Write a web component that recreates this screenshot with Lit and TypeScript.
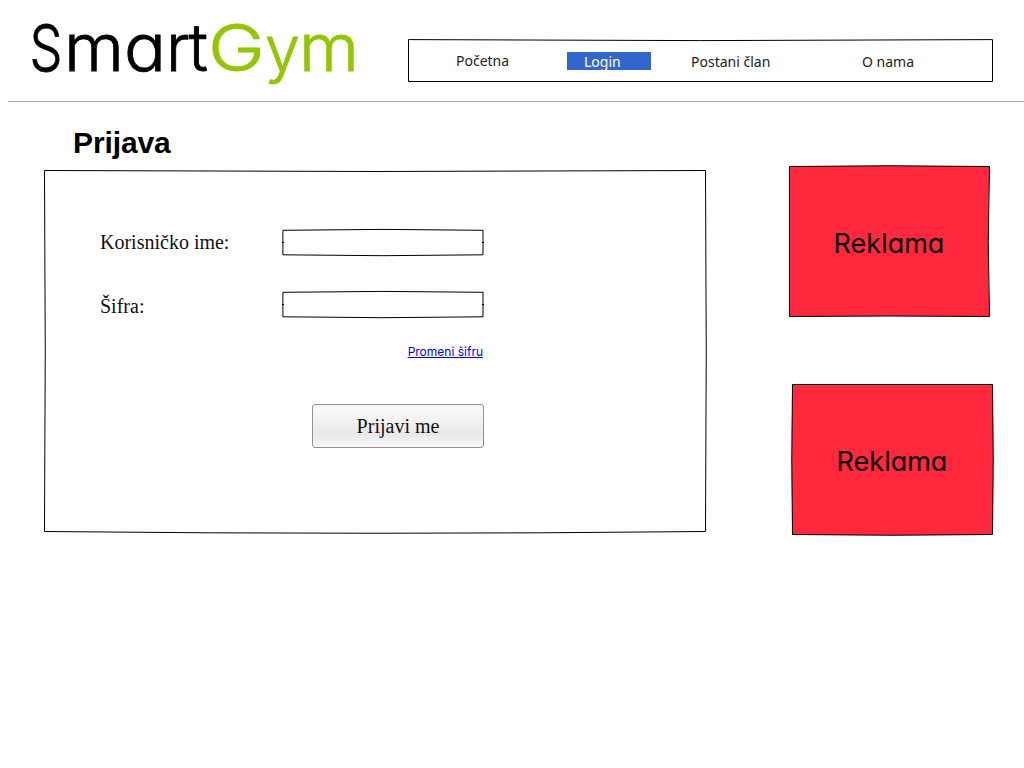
import { LitElement, html, css, svg } from "lit";
import { customElement, property } from "lit/decorators.js";

/** Box with a slightly bowed, hand-drawn outline; content sits on top of it. */
@customElement("sketch-box")
class SketchBox extends LitElement {
  @property() path = "";
  @property() fill = "none";
  static styles = css`
    :host { display: grid; box-sizing: border-box; }
    svg, .content { grid-area: 1 / 1; min-width: 0; min-height: 0; }
    svg { width: 100%; height: 100%; overflow: visible; display: block; }
    .content { display: grid; position: relative; }
    path { stroke: #000; stroke-width: 1; }
  `;
  render() {
    return html`<svg>${svg`<path d=${this.path} fill=${this.fill}></path>`}</svg>
      <div class="content"><slot></slot></div>`;
  }
}

const FIELD_PATH = "M.9 2.3Q101 .5 201 2.3V26.8Q101 28.6 .9 26.8ZM0 14.5H2M200 14.5H202";

@customElement("app-root")
class AppRoot extends LitElement {
  static styles = css`
    :host { display: block; width: 1024px; height: 768px; background: #fff; color: #000; overflow: hidden; }
    .header { display: flex; height: 102px; margin-left: 8px; border-bottom: 1px solid #a8a89f; box-sizing: border-box; }
    .logo { width: 400px; height: 101px; flex: none; }
    .logo text { font-family: "Inter", sans-serif; font-weight: 300; font-size: 65px; font-feature-settings: "cv11" 1; stroke: #000; stroke-width: 0.8; }
    .logo .tail { font-size: 63px; }
    .logo .green { fill: #93c600; stroke: #93c600; }
    .nav { width: 585px; height: 42px; margin-top: 39px; flex: none; }
    .links { display: flex; align-items: flex-start; padding-top: 13px; font: 14px/18px "Noto Sans", sans-serif; color: #222; white-space: nowrap; }
    .links span { box-sizing: border-box; height: 18px; flex: none; }
    .l1 { width: 111px; margin-left: 48px; }
    .links .l2 { width: 84px; background: #3366cc; color: #fff; padding-left: 17px; line-height: 20px; }
    .l3 { width: 131px; margin-left: 40px; padding-top: 1px; }
    .l4 { margin-left: 40px; padding-top: 1px; }
    .main { display: flex; }
    .left { width: 662px; margin-left: 44px; }
    h1 { margin: 0; padding: 23px 0 0 29px; height: 45px; font: bold 30px/36px "Liberation Sans", sans-serif; letter-spacing: -0.1px; }
    .panel { height: 362px; }
    .form { display: grid; grid-template-columns: 182px 202px; grid-template-rows: 62px 54px 60px 44px; padding: 58px 0 0 56px; align-items: start; font: 20px/24px "Liberation Serif", serif; color: #111; }
    .label { padding-top: 2px; }
    .label.low { padding-top: 4px; }
    .field { height: 27px; }
    .link { grid-column: 2; justify-self: end; font: 12px/16px "Comic Sans MS", "Inter", sans-serif; font-feature-settings: "cv11" 1; color: #00f; text-decoration: underline; white-space: nowrap; margin-right: 1px; }
    button { grid-column: 2; justify-self: end; width: 172px; height: 44px; padding: 0; border: 1px solid #9c9084; border-radius: 3px; background: linear-gradient(#fafafa, #efefef 48%, #e8e8e8 70%, #f8f8f8); font: 20px/24px "Liberation Serif", serif; color: #111; }
    .ads { display: flex; flex-direction: column; gap: 67px; padding: 64px 0 0 83px; }
    .ad { width: 202px; height: 151px; }
    .ad.second { margin-left: 3px; }
    .word { place-self: center; padding: 4px 2px 0 0; font: 27px/34px "Comic Sans MS", "Inter", sans-serif; font-feature-settings: "cv11" 1; }
  `;
  render() {
    return html`
      <div class="header">
        <svg class="logo" viewBox="8 0 400 101">
          <text y="71"><tspan x="29.5" textLength="33" lengthAdjust="spacingAndGlyphs">S</tspan><tspan x="64" textLength="60" lengthAdjust="spacingAndGlyphs">m</tspan><tspan x="124" textLength="42" lengthAdjust="spacingAndGlyphs">a</tspan><tspan x="166">r</tspan><tspan x="188.5">t</tspan></text>
          <text class="green" y="71"><tspan x="208" textLength="57" lengthAdjust="spacingAndGlyphs">G</tspan><tspan class="tail" x="265">y</tspan><tspan x="299" textLength="60" lengthAdjust="spacingAndGlyphs">m</tspan></text>
        </svg>
        <sketch-box class="nav" path="M.5 .6Q292 2.6 584.5.6V42.5H.5Z">
          <div class="links">
            <span class="l1">Početna</span><span class="l2">Login</span><span class="l3">Postani član</span><span class="l4">O nama</span>
          </div>
        </sketch-box>
      </div>
      <div class="main">
        <div class="left">
          <h1>Prijava</h1>
          <sketch-box class="panel" path="M.5.5Q331 2.5 661.5.5Q663 181 661.5 361.5Q331 365 .5 361.5Q2 181 .5.5Z">
            <div class="form">
              <span class="label">Korisničko ime:</span><sketch-box class="field" path=${FIELD_PATH}></sketch-box>
              <span class="label low">Šifra:</span><sketch-box class="field" path=${FIELD_PATH}></sketch-box>
              <a class="link">Promeni šifru</a>
              <button>Prijavi me</button>
            </div>
          </sketch-box>
        </div>
        <div class="ads">
          <sketch-box class="ad" fill="#ff283c" path="M.5.5Q100-1 200.5.5Q198 75 200.5 150.5Q100 149.5 .5 150.5Z">
            <span class="word">Reklama</span>
          </sketch-box>
          <sketch-box class="ad second" fill="#ff283c" path="M.5.5H200.5Q202 75 200.5 150.5Q100 152 .5 150.5Q-1 75 .5.5Z">
            <span class="word">Reklama</span>
          </sketch-box>
        </div>
      </div>
    `;
  }
}
